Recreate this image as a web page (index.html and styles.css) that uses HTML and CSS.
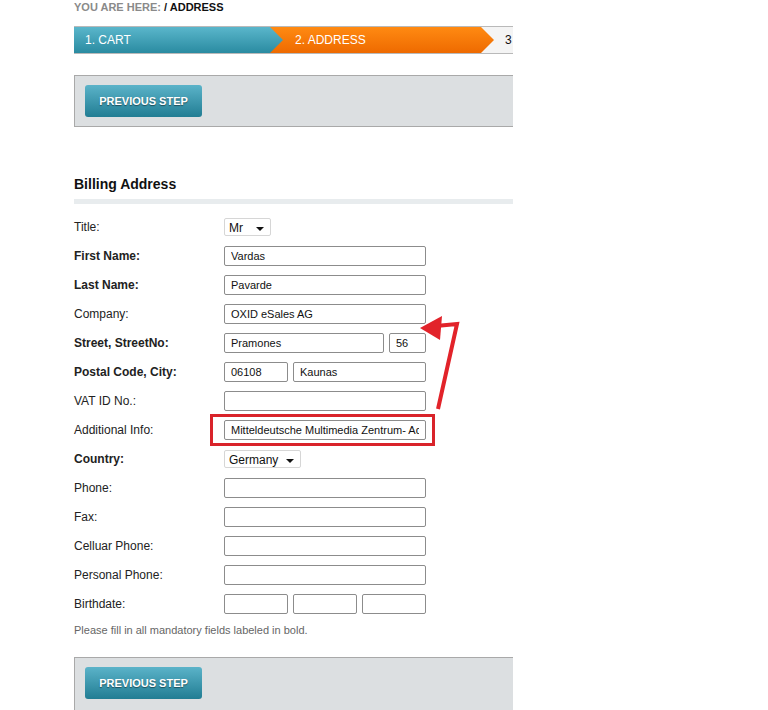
FILE: index.html
```html
<!DOCTYPE html>
<html lang="en">
<head>
    <meta charset="UTF-8">
    <title>Address | Checkout</title>
    <link rel="stylesheet" href="styles.css">
</head>
<body>
    <div class="page">
        <div class="breadcrumb">YOU ARE HERE: <b>/ ADDRESS</b></div>

        <ul class="steps">
            <li class="step step1">1. CART</li>
            <li class="step step2">2. ADDRESS</li>
            <li class="step step3">3</li>
        </ul>

        <div class="lineBox">
            <button class="prevButton">PREVIOUS STEP</button>
        </div>

        <h3 class="blockHead">Billing Address</h3>

        <form class="billForm" action="">
            <div class="row">
                <label>Title:</label>
                <div class="fakeSelect sel-title">Mr <span class="caret"></span></div>
            </div>
            <div class="row">
                <label class="req">First Name:</label>
                <input type="text" class="field" value="Vardas">
            </div>
            <div class="row">
                <label class="req">Last Name:</label>
                <input type="text" class="field" value="Pavarde">
            </div>
            <div class="row">
                <label>Company:</label>
                <input type="text" class="field" value="OXID eSales AG">
            </div>
            <div class="row">
                <label class="req">Street, StreetNo:</label>
                <div class="split">
                    <input type="text" class="field street" value="Pramones">
                    <input type="text" class="field streetNo" value="56">
                </div>
            </div>
            <div class="row">
                <label class="req">Postal Code, City:</label>
                <div class="split">
                    <input type="text" class="field zip" value="06108">
                    <input type="text" class="field city" value="Kaunas">
                </div>
            </div>
            <div class="row">
                <label>VAT ID No.:</label>
                <input type="text" class="field" value="">
            </div>
            <div class="row">
                <label>Additional Info:</label>
                <div class="marked">
                    <input type="text" class="field" value="Mitteldeutsche Multimedia Zentrum- Adolf">
                </div>
            </div>
            <div class="row">
                <label class="req">Country:</label>
                <div class="fakeSelect sel-country">Germany <span class="caret"></span></div>
            </div>
            <div class="row">
                <label>Phone:</label>
                <input type="text" class="field" value="">
            </div>
            <div class="row">
                <label>Fax:</label>
                <input type="text" class="field" value="">
            </div>
            <div class="row">
                <label>Celluar Phone:</label>
                <input type="text" class="field" value="">
            </div>
            <div class="row">
                <label>Personal Phone:</label>
                <input type="text" class="field" value="">
            </div>
            <div class="row">
                <label>Birthdate:</label>
                <div class="split">
                    <input type="text" class="field date">
                    <input type="text" class="field date">
                    <input type="text" class="field date">
                </div>
            </div>
            <p class="note">Please fill in all mandatory fields labeled in bold.</p>
        </form>

        <div class="lineBox lineBox-bottom">
            <button class="prevButton">PREVIOUS STEP</button>
        </div>

        <!-- arrow pointing from the marked field up to the company row -->
        <svg class="pointer" width="80" height="140" viewBox="0 0 80 140">
            <polyline points="54,128 73,43 52,45" fill="none" stroke="#e2232a" stroke-width="4" stroke-linejoin="miter"/>
            <polygon points="36,47 58,35 56,59" fill="#e2232a"/>
        </svg>
    </div>
</body>
</html>
```

FILE: styles.css
```css
body {
    margin: 0;
    font-family: "Liberation Sans", Arial, Helvetica, sans-serif;
    font-size: 12px;
    color: #222;
    background: #fff;
}

.page {
    position: relative;
    width: 439px;
    padding-left: 74px;
    overflow: hidden;
    height: 710px;
}

.breadcrumb {
    font-size: 11px;
    font-weight: bold;
    color: #8a8a8a;
    height: 15px;
    line-height: 14px;
}

.breadcrumb b {
    color: #111;
}

.steps {
    list-style: none;
    margin: 11px 0 0 0;
    padding: 0;
    display: flex;
    height: 28px;
    width: 480px;
    border-top: 1px solid #b9b9b9;
    border-bottom: 1px solid #b9b9b9;
    box-sizing: border-box;
    background: #f4f4f4;
}

.step {
    height: 26px;
    line-height: 26px;
    font-size: 12px;
    color: #fff;
    position: relative;
}

.step1 {
    width: 209px;
    padding-left: 11px;
    box-sizing: border-box;
    background: linear-gradient(to bottom, #5ab6cb, #2a8ba1);
    clip-path: polygon(0 0, 196px 0, 209px 50%, 196px 100%, 0 100%);
    z-index: 2;
}

.step2 {
    width: 224px;
    margin-left: -13px;
    padding-left: 25px;
    box-sizing: border-box;
    background: linear-gradient(to bottom, #ff8a12, #ee6a00);
    clip-path: polygon(0 0, 211px 0, 224px 50%, 211px 100%, 0 100%);
    z-index: 1;
}

.step3 {
    color: #111;
    padding-left: 11px;
}

.lineBox {
    background: #dcdfe1;
    border: 1px solid #a9a9a9;
    border-right: none;
    height: 52px;
    margin-top: 21px;
    padding: 9px 0 0 10px;
    box-sizing: border-box;
}

.lineBox-bottom {
    height: 70px;
}

.prevButton {
    width: 117px;
    height: 32px;
    border: none;
    border-radius: 3px;
    background: linear-gradient(to bottom, #5bb3c9, #217d93);
    color: #fff;
    font-family: "Liberation Sans", Arial, sans-serif;
    font-size: 11px;
    font-weight: bold;
    text-shadow: 0 1px 1px rgba(0, 0, 0, 0.45);
    padding: 0;
    cursor: pointer;
}

.blockHead {
    font-size: 14px;
    font-weight: bold;
    color: #111;
    margin: 49px 0 0 0;
    padding-bottom: 7px;
    border-bottom: 5px solid #e8ecee;
    line-height: 16px;
}

.billForm {
    margin-top: 8px;
}

.row {
    display: flex;
    align-items: center;
    height: 29px;
}

.row label {
    width: 150px;
    color: #222;
}

.row label.req {
    font-weight: bold;
}

.field {
    width: 202px;
    height: 20px;
    box-sizing: border-box;
    border: 1px solid #8c8c8c;
    border-radius: 2px;
    padding: 0 6px;
    font-family: "Liberation Sans", Arial, sans-serif;
    font-size: 11px;
    color: #111;
    background: #fff;
    outline: none;
}

.split {
    display: flex;
    gap: 5px;
    width: 202px;
}

.street { width: 160px; }
.streetNo { width: 37px; }
.zip { width: 64px; }
.city { width: 133px; }
.date { width: 64px; }

.marked {
    margin-left: -14px;
    padding: 3px 6px 3px 11px;
    border: 3px solid #d9232a;
}

.fakeSelect {
    height: 18px;
    line-height: 18px;
    border: 1px solid #d6d6d6;
    border-radius: 2px;
    box-sizing: border-box;
    padding-left: 4px;
    font-size: 12px;
    color: #111;
    position: relative;
    background: #fff;
}

.sel-title { width: 47px; }
.sel-country { width: 77px; }

.caret {
    position: absolute;
    right: 6px;
    top: 8px;
    border-left: 4px solid transparent;
    border-right: 4px solid transparent;
    border-top: 4px solid #111;
}

.note {
    font-size: 11px;
    color: #666;
    margin: 6px 0 0 0;
}

.pointer {
    position: absolute;
    left: 384px;
    top: 281px;
}
```
